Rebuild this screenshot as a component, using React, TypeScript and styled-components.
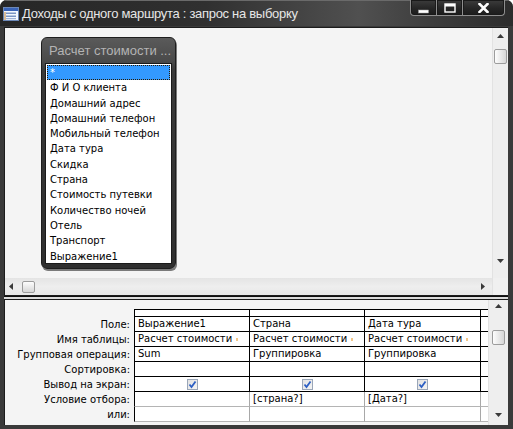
import React from 'react';
import styled, { createGlobalStyle } from 'styled-components';

const GlobalStyle = createGlobalStyle`
  html, body {
    margin: 0;
    padding: 0;
    background: #ffffff;
  }
  body {
    font-family: "DejaVu Sans", "Liberation Sans", sans-serif;
  }
`;

const Window = styled.div`
  width: 513px;
  height: 429px;
  display: flex;
  flex-direction: column;
  overflow: hidden;
  background: #3a3a3a;
  border-radius: 7px 7px 0 0;
`;

const TitleBar = styled.div`
  height: 26px;
  flex: none;
  display: flex;
  align-items: flex-start;
  padding-left: 3px;
  background: linear-gradient(90deg, #262626 0%, #303030 40%, #505050 70%, #3c3c3c 85%, #2c2c2c 100%);
  box-shadow: inset 0 1px 0 #6a6a6a;
`;

const TitleIcon = styled.svg`
  margin-top: 7px;
  flex: none;
`;

const TitleText = styled.div`
  margin-left: 2px;
  margin-top: 6px;
  font-family: "Liberation Sans", Arial, sans-serif;
  font-size: 13px;
  letter-spacing: -0.3px;
  line-height: 16px;
  color: #e6e6e6;
  white-space: nowrap;
`;

const CaptionButtons = styled.div`
  margin-left: auto;
  margin-right: 8px;
  display: flex;
`;

const CaptionButton = styled.div<{ $w: number; $pos?: 'first' | 'last' }>`
  width: ${(p) => p.$w}px;
  height: 16px;
  box-sizing: border-box;
  display: flex;
  align-items: center;
  justify-content: center;
  border: 1px solid #8e8e8e;
  border-top: none;
  border-left-width: ${(p) => (p.$pos === 'first' ? 1 : 0)}px;
  border-radius: ${(p) =>
    p.$pos === 'first' ? '0 0 0 4px' : p.$pos === 'last' ? '0 0 4px 0' : '0'};
  background: linear-gradient(180deg, #3c3c3c 0%, #262626 55%, #1c1c1c 100%);
  box-shadow: inset 0 0 0 1px #1a1a1a;
`;

const Frame = styled.div`
  flex: 1;
  display: flex;
  flex-direction: column;
  padding: 1px 5px 4px 4px;
  min-height: 0;
`;

const UpperPane = styled.div`
  height: 269px;
  flex: none;
  box-sizing: border-box;
  border: 1px solid #1c1c1c;
  border-right: none;
  background: #f4f4f4;
  display: grid;
  grid-template-columns: 1fr 16px;
  grid-template-rows: 1fr 17px;
`;

const Canvas = styled.div`
  position: relative;
  overflow: hidden;
`;

const TableBox = styled.div`
  position: absolute;
  left: 36px;
  top: 9px;
  width: 135px;
  height: 232px;
  box-sizing: border-box;
  border-radius: 6px;
  background: linear-gradient(180deg, #5a5a5a 0%, #4a4a4a 10%, #3a3a3a 14%, #2f2f2f 100%);
  border: 1px solid #1e1e1e;
  box-shadow: 1px 2px 0 #7a7a7a;
  display: flex;
  flex-direction: column;
`;

const TableTitle = styled.div`
  height: 25px;
  flex: none;
  padding-left: 7px;
  font-family: "Liberation Sans", Arial, sans-serif;
  font-size: 13px;
  line-height: 26px;
  color: #b4b4b4;
  white-space: nowrap;
  overflow: hidden;
`;

const FieldList = styled.div`
  flex: 1;
  margin: 0 3px 4px 3px;
  background: #ffffff;
  border: 1px solid #1a1a1a;
  padding-top: 1px;
  overflow: hidden;
`;

const FieldItem = styled.div<{ $selected?: boolean }>`
  height: 15.3px;
  box-sizing: border-box;
  margin: 0 1px;
  padding-left: 2px;
  font-size: 10px;
  line-height: 14px;
  white-space: nowrap;
  color: ${(p) => (p.$selected ? '#ffffff' : '#000000')};
  background: ${(p) => (p.$selected ? '#3399ff' : 'transparent')};
  border: 1px dotted ${(p) => (p.$selected ? '#2a1a00' : 'transparent')};
`;

const VScroll = styled.div<{ $lower?: boolean }>`
  display: flex;
  flex-direction: column;
  align-items: center;
  box-sizing: border-box;
  width: ${(p) => (p.$lower ? '20px' : 'auto')};
  background: #eeeeee;
  border-left: 1px solid #e2e2e2;
  padding-top: ${(p) => (p.$lower ? 4 : 6)}px;
`;

const HScroll = styled.div`
  display: flex;
  align-items: center;
  background: linear-gradient(180deg, #e4e4e4 0%, #eeeeee 50%, #e8e8e8 100%);
  padding-left: 4px;
`;

const ScrollCorner = styled.div`
  background: #f0f0f0;
  border-left: 1px solid #e2e2e2;
`;

const Arrow = styled.svg`
  flex: none;
`;

const Thumb = styled.div<{ $horizontal?: boolean }>`
  width: 13px;
  height: ${(p) => (p.$horizontal ? 12 : 15)}px;
  box-sizing: border-box;
  border: 1px solid #9c9c9c;
  border-radius: 2px;
  background: linear-gradient(${(p) => (p.$horizontal ? '180deg' : '90deg')}, #fdfdfd 0%, #e6e6e6 60%, #d6d6d6 100%);
  flex: none;
`;

const Gap = styled.div<{ $size: number }>`
  flex: none;
  width: ${(p) => p.$size}px;
  height: ${(p) => p.$size}px;
`;

const Spacer = styled.div`
  flex: 1;
`;

const Splitter = styled.div`
  height: 3px;
  flex: none;
  box-sizing: border-box;
  border-top: 1px solid #101010;
  background: #dcdcdc;
`;

const LowerPane = styled.div`
  flex: 1;
  min-height: 0;
  display: flex;
  box-sizing: border-box;
  border: 1px solid #1c1c1c;
  border-right: none;
  border-bottom: none;
  background: #f4f4f4;
  overflow: hidden;
`;

const GridArea = styled.div`
  flex: 1;
  padding-top: 9px;
  overflow: hidden;
`;

const QBE = styled.div`
  display: grid;
  grid-template-columns: 129px 116px 115px 116px 7px;
  grid-template-rows: 8px repeat(7, 15px);
`;

const Label = styled.div`
  text-align: right;
  padding-right: 4px;
  font-size: 10px;
  line-height: 15px;
  color: #000000;
  white-space: nowrap;
`;

const Cell = styled.div<{ $first?: boolean; $top?: boolean; $light?: boolean; $open?: boolean }>`
  box-sizing: border-box;
  background: #ffffff;
  border-right: ${(p) => (p.$open ? 'none' : `1px solid ${p.$light ? '#a8a8a8' : '#000000'}`)};
  border-bottom: 1px solid ${(p) => (p.$light ? '#b4b4b4' : '#000000')};
  border-left: ${(p) => (p.$first ? '1px solid #000000' : 'none')};
  border-top: ${(p) => (p.$top ? '1px solid #000000' : 'none')};
  padding-left: 3px;
  font-size: 10px;
  line-height: 14px;
  white-space: nowrap;
  overflow: hidden;
  display: flex;
  align-items: center;
`;

const CheckCell = styled(Cell)`
  justify-content: center;
  padding-left: 0;
`;

const Check = styled.div`
  width: 11px;
  height: 11px;
  box-sizing: border-box;
  border: 1px solid #9aa6b8;
  background: linear-gradient(135deg, #e2e2e2 0%, #f4f4f4 100%);
  display: flex;
  align-items: center;
  justify-content: center;
`;

const Mark = styled.span`
  display: inline-block;
  width: 2px;
  height: 3px;
  margin-left: 4px;
  background: #f3c78a;
`;

const fields = [
  '*',
  'Ф И О клиента',
  'Домашний адрес',
  'Домашний телефон',
  'Мобильный телефон',
  'Дата тура',
  'Скидка',
  'Страна',
  'Стоимость путевки',
  'Количество ночей',
  'Отель',
  'Транспорт',
  'Выражение1',
];

const labels = [
  'Поле:',
  'Имя таблицы:',
  'Групповая операция:',
  'Сортировка:',
  'Вывод на экран:',
  'Условие отбора:',
  'или:',
];

type Column = {
  field: string;
  table: string;
  total: string;
  sort: string;
  show: boolean;
  criteria: string;
  or: string;
};

const columns: Column[] = [
  { field: 'Выражение1', table: 'Расчет стоимости', total: 'Sum', sort: '', show: true, criteria: '', or: '' },
  { field: 'Страна', table: 'Расчет стоимости', total: 'Группировка', sort: '', show: true, criteria: '[страна?]', or: '' },
  { field: 'Дата тура', table: 'Расчет стоимости', total: 'Группировка', sort: '', show: true, criteria: '[Дата?]', or: '' },
];

const ArrowUp = () => (
  <Arrow width="7" height="4" viewBox="0 0 7 4">
    <path d="M0 4 L3.5 0 L7 4 Z" fill="#3a3a3a" />
  </Arrow>
);

const ArrowDown = () => (
  <Arrow width="7" height="4" viewBox="0 0 7 4">
    <path d="M0 0 L3.5 4 L7 0 Z" fill="#3a3a3a" />
  </Arrow>
);

const ArrowLeft = () => (
  <Arrow width="4" height="7" viewBox="0 0 4 7">
    <path d="M4 0 L0 3.5 L4 7 Z" fill="#3a3a3a" />
  </Arrow>
);

const ArrowRight = () => (
  <Arrow width="4" height="7" viewBox="0 0 4 7">
    <path d="M0 0 L4 3.5 L0 7 Z" fill="#3a3a3a" />
  </Arrow>
);

const QueryIcon = () => (
  <TitleIcon width="17" height="15" viewBox="0 0 17 15">
    <rect x="0.5" y="0.5" width="15" height="13" fill="#f4f8ff" stroke="#6c88b8" />
    <rect x="1" y="1" width="14" height="3" fill="#3a64b8" />
    <rect x="3" y="5.5" width="10" height="1.5" fill="#7b95c4" />
    <rect x="3" y="8.5" width="10" height="1.5" fill="#7b95c4" />
    <rect x="3" y="11" width="10" height="1.2" fill="#9fb3d8" />
    <rect x="1.5" y="5" width="1" height="8" fill="#c08030" />
  </TitleIcon>
);

const CheckMark = () => (
  <svg width="9" height="9" viewBox="0 0 9 9">
    <path d="M1.5 4.5 L3.5 7 L7.5 1.5" fill="none" stroke="#2c5fc4" strokeWidth="1.8" />
  </svg>
);

const rowValue = (c: Column, i: number): string => {
  switch (i) {
    case 0:
      return c.field;
    case 1:
      return c.table;
    case 2:
      return c.total;
    case 3:
      return c.sort;
    case 5:
      return c.criteria;
    default:
      return c.or;
  }
};

export default function App() {
  return (
    <>
      <GlobalStyle />
      <Window>
        <TitleBar>
          <QueryIcon />
          <TitleText>Доходы с одного маршрута : запрос на выборку</TitleText>
          <CaptionButtons>
            <CaptionButton $w={27} $pos="first">
              <svg width="11" height="12" viewBox="0 0 11 12">
                <rect x="0.5" y="8" width="10" height="3" fill="#ffffff" stroke="#9a9a9a" strokeWidth="0.5" />
              </svg>
            </CaptionButton>
            <CaptionButton $w={26}>
              <svg width="12" height="10" viewBox="0 0 12 10">
                <rect x="1" y="1" width="10" height="8" fill="none" stroke="#ffffff" strokeWidth="1.4" />
                <rect x="1" y="1" width="10" height="2.5" fill="#ffffff" />
              </svg>
            </CaptionButton>
            <CaptionButton $w={42} $pos="last">
              <svg width="11" height="10" viewBox="0 0 11 10">
                <path d="M1.5 1 L9.5 9 M9.5 1 L1.5 9" stroke="#ffffff" strokeWidth="2.6" strokeLinecap="square" />
              </svg>
            </CaptionButton>
          </CaptionButtons>
        </TitleBar>

        <Frame>
          <UpperPane>
            <Canvas>
              <TableBox>
                <TableTitle>Расчет стоимости ...</TableTitle>
                <FieldList>
                  {fields.map((f, i) => (
                    <FieldItem key={f} $selected={i === 0}>
                      {f}
                    </FieldItem>
                  ))}
                </FieldList>
              </TableBox>
            </Canvas>
            <VScroll>
              <ArrowUp />
              <Gap $size={11} />
              <Thumb />
              <Spacer />
              <ArrowDown />
              <Gap $size={15} />
            </VScroll>
            <HScroll>
              <ArrowLeft />
              <Gap $size={9} />
              <Thumb $horizontal />
              <Spacer />
              <ArrowRight />
              <Gap $size={7} />
            </HScroll>
            <ScrollCorner />
          </UpperPane>

          <Splitter />

          <LowerPane>
            <GridArea>
              <QBE>
                <Label />
                {columns.map((c, j) => (
                  <Cell key={`sel-${c.field}`} $top $first={j === 0} />
                ))}
                <Cell $top $open />
                {labels.map((l, i) => (
                  <React.Fragment key={l}>
                    <Label>{l}</Label>
                    {columns.map((c, j) =>
                      i === 4 ? (
                        <CheckCell key={`${l}-${c.field}`} $first={j === 0}>
                          {c.show && (
                            <Check>
                              <CheckMark />
                            </Check>
                          )}
                        </CheckCell>
                      ) : (
                        <Cell key={`${l}-${c.field}`} $first={j === 0} $light={i >= 5}>
                          {rowValue(c, i)}
                          {i === 1 && <Mark />}
                        </Cell>
                      )
                    )}
                    <Cell $open $light={i >= 5} />
                  </React.Fragment>
                ))}
              </QBE>
            </GridArea>
            <VScroll $lower>
              <ArrowUp />
              <Gap $size={22} />
              <Thumb />
              <Spacer />
              <ArrowDown />
              <Gap $size={8} />
            </VScroll>
          </LowerPane>
        </Frame>
      </Window>
    </>
  );
}
